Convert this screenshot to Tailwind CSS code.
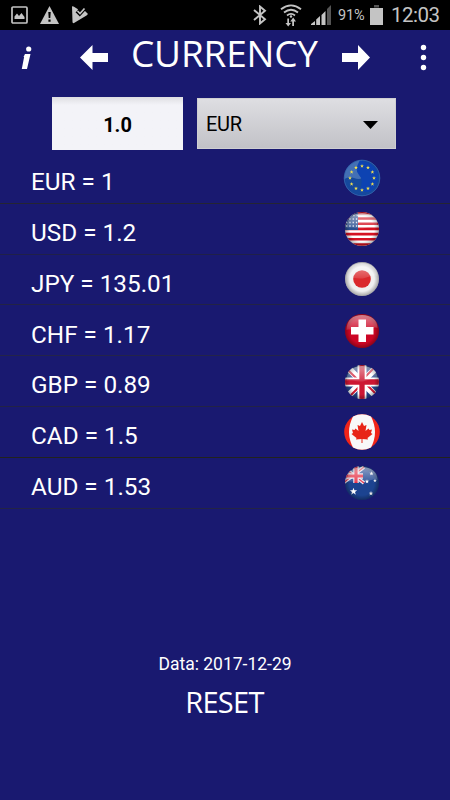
<!DOCTYPE html>
<html lang="en">
<head>
<meta charset="utf-8">
<title>Currency</title>
<script src="https://cdn.jsdelivr.net/npm/@tailwindcss/browser@4"></script>
</head>
<body class="w-[450px] h-[800px] overflow-hidden bg-[#191970] text-white font-['Roboto',sans-serif] flex flex-col">
<svg class="absolute w-0 h-0" aria-hidden="true">
  <defs>
    <clipPath id="c"><circle cx="20" cy="20" r="17"/></clipPath>
    <linearGradient id="gl" x1="0" y1="0" x2="0" y2="1"><stop offset="0" stop-color="#fff" stop-opacity=".5"/><stop offset="1" stop-color="#fff" stop-opacity=".12"/></linearGradient>
    <radialGradient id="sh" cx=".5" cy=".5" r=".5"><stop offset=".72" stop-color="#000" stop-opacity="0"/><stop offset="1" stop-color="#000" stop-opacity=".32"/></radialGradient>
    <g id="gloss"><circle cx="20" cy="20" r="17" fill="url(#sh)"/><path d="M4.500 19C4.500 9 11 4 20 4s15.500 5 15.500 13C29 15 25 20 18 19.500S8 18 4.500 19Z" fill="url(#gl)"/></g>
    <path id="st" d="M0-2 .5-.6 1.900-.6 .8.300 1.200 1.700 0 .8-1.200 1.700-.8.300-1.900-.6-.5-.6Z"/>
  </defs>
</svg>

<header class="h-[30px] shrink-0 bg-black flex items-center">
  <svg class="ml-[11px]" width="17" height="18" viewBox="0 0 17 18"><rect x="1" y="1" width="15" height="16" rx="1" fill="none" stroke="#c4c4c4" stroke-width="1.700"/><path d="M3.500 13V10.500L6 7.500 8 10 10.500 7 13.500 11V13Z" fill="#c4c4c4"/></svg>
  <svg class="ml-[12px]" width="19" height="18" viewBox="0 0 19 18"><path d="M9.500 0 19 18H0Z" fill="#c4c4c4"/><path d="M8.300 6h2.400l-.4 6H8.700ZM8.400 13.500h2.200v2.200H8.400Z" fill="#000"/></svg>
  <svg class="ml-[13px]" width="17" height="18" viewBox="0 0 17 18"><path d="M0 .5Q1 0 2 .8L6 3.200 4.500 6.500 7.800 9.500 12 4 16 8 14.500 9.500 2 17Q.5 17.500.5 16Z" fill="#c4c4c4"/><path d="M4 5.800 7.800 9.500 14 2.800" fill="none" stroke="#000" stroke-width="1.300"/><path d="M5.500 5 8 7.500 12.500 2.500" fill="none" stroke="#c4c4c4" stroke-width="1.700"/></svg>
  <svg class="ml-[164px]" width="14" height="20" viewBox="0 0 14 20"><path d="M1 5 12 14.300 7 18.500V1.500L12 5.700 1 15" fill="none" stroke="#c4c4c4" stroke-width="1.900"/></svg>
  <svg class="ml-[13px]" width="22" height="23" viewBox="0 0 22 23"><g fill="none" stroke="#c4c4c4" stroke-width="1.800"><path d="M1 5.300Q11-2.500 21 5.300M4 8.500Q11 3 18 8.500M7 11.500Q11 8.300 15 11.500"/></g><path d="M7.300 14.500H9V19H11L8.200 22.500 5.500 19H7.300ZM12.200 22V17.500h-1.900l2.900-4 2.800 4H14V22Z" fill="#c4c4c4"/><circle cx="11" cy="12.500" r="1.200" fill="#c4c4c4"/></svg>
  <svg class="ml-[9px]" width="20" height="20" viewBox="0 0 20 20"><g fill="#c4c4c4"><path d="M0 20V19L4 16V20ZM5.200 20V14.500L9 11V20ZM10.500 20V10L14.500 6V20Z"/></g><path d="M16 20V4L20 0V20Z" fill="#555"/></svg>
  <span class="ml-[7px] w-[28px] text-[14.5px] tracking-[-0.2px] text-[#c4c4c4] pt-[1px]">91%</span>
  <svg class="ml-[4px]" width="13" height="20" viewBox="0 0 13 20"><path d="M4 0h5v2.500H4Z" fill="#555"/><path d="M0 3h13v17H0Z" fill="#c4c4c4"/></svg>
  <span class="ml-[8px] text-[20.5px] tracking-[-0.5px] text-[#c4c4c4] pt-[1px]">12:03</span>
</header>

<nav class="h-[60px] shrink-0 flex items-start">
  <svg class="ml-[21px] mt-[15px]" width="11" height="25" viewBox="0 0 11 25"><circle cx="7.700" cy="4" r="2.600" fill="#fff"/><path d="M4 9H9.500L6 24H.800L3.100 12H2.500Z" fill="#fff"/></svg>
  <svg class="ml-[48px] mt-[15px]" width="28" height="25" viewBox="0 0 28 25"><path d="M0 12.500 12.500 0V8H28V17H12.500V25Z" fill="#fff"/></svg>
  <h1 class="ml-[23px] w-[189px] mt-[3px] h-[40px] leading-[40px] font-['Open_Sans',sans-serif] text-[37px] tracking-[-0.2px] whitespace-nowrap">CURRENCY</h1>
  <svg class="ml-[22px] mt-[15px]" width="28" height="25" viewBox="0 0 28 25"><path d="M28 12.500 16 0V8H0V17H16V25Z" fill="#fff"/></svg>
  <svg class="ml-[50px] mt-[14px]" width="7" height="27" viewBox="0 0 7 27" fill="#fff"><circle cx="3.500" cy="3.500" r="2.700"/><circle cx="3.500" cy="13.500" r="2.700"/><circle cx="3.500" cy="23.500" r="2.700"/></svg>
</nav>

<section class="h-[63px] shrink-0 flex items-start pl-[52px] pt-[7px] text-black text-[20px]">
  <div class="w-[131px] h-[53px] bg-linear-to-b from-[#dedee2] via-[#f3f3f8] via-15% to-[#f3f3f8] flex items-center justify-center font-bold pt-[2px]">1.0</div>
  <div class="ml-[14px] mt-[1px] w-[199px] h-[51px] bg-linear-to-b from-[#dedee2] to-[#c2c2c7] border border-[#cfcfd2] flex items-center justify-between pl-[8px] pr-[17px]"><span class="tracking-[-0.3px]">EUR</span><svg class="mt-[2px]" width="15" height="8" viewBox="0 0 15 8"><path d="M0 0H15L7.500 8Z"/></svg></div>
</section>

<ul class="shrink-0 text-[24.3px]">
  <li class="h-[50.8px] border-b border-[#252533] flex items-center justify-between pl-[31px] pr-[68px]"><span class="pt-[9px]">EUR = 1</span>
    <svg width="40" height="40" viewBox="0 0 40 40"><circle cx="20" cy="20" r="18.200" fill="#15499d"/><path d="M20 20V2.500A17.500 17.500 0 0 0 2.500 21Q7 18 12 20T20 20Z" fill="#638bc5" opacity=".6"/><path d="M18 2Q12 12 17 17T18 32Q28 38 34 27T29 6Z" fill="#0d43b2"/><g fill="#f7e34d"><use href="#st" x="20" y="8"/><use href="#st" x="26" y="9.600"/><use href="#st" x="30.400" y="14"/><use href="#st" x="32" y="20"/><use href="#st" x="30.400" y="26"/><use href="#st" x="26" y="30.400"/><use href="#st" x="20" y="32"/><use href="#st" x="14" y="30.400"/><use href="#st" x="9.600" y="26"/><use href="#st" x="8" y="20"/><use href="#st" x="9.600" y="14"/><use href="#st" x="14" y="9.600"/></g><circle cx="20" cy="20" r="17.800" fill="none" stroke="#5a84bd" stroke-width=".8" opacity=".5"/></svg></li>
  <li class="h-[50.8px] border-b border-[#202048] flex items-center justify-between pl-[31px] pr-[68px]"><span class="pt-[9px]">USD = 1.2</span>
    <svg width="40" height="40" viewBox="0 0 40 40"><g clip-path="url(#c)"><path d="M0 0H40V40H0Z" fill="#fff"/><path d="M0 4.300H40M0 9.500H40M0 14.700H40M0 19.900H40M0 25.100H40M0 30.300H40M0 35.500H40" stroke="#d51222" stroke-width="2.600"/><path d="M0 0H16V21H0Z" fill="#294f91"/><path d="M4 10H16M4 13.500H16M4 17H16M8 6.500H16" stroke="#dfe7f3" stroke-width="1.300" stroke-dasharray="1.300 2"/></g><use href="#gloss"/></svg></li>
  <li class="h-[50.8px] border-b border-[#232345] flex items-center justify-between pl-[31px] pr-[68px]"><span class="pt-[9px]">JPY = 135.01</span>
    <svg width="40" height="40" viewBox="0 0 40 40"><circle cx="20" cy="20" r="17" fill="#f0f0f0"/><circle cx="20" cy="20" r="8.800" fill="#da282c"/><use href="#gloss"/></svg></li>
  <li class="h-[50.8px] border-b border-[#242448] flex items-center justify-between pl-[31px] pr-[68px]"><span class="pt-[9px]">CHF = 1.17</span>
    <svg class="mt-[2px]" width="40" height="40" viewBox="0 0 40 40"><circle cx="20" cy="20" r="17" fill="#cc0524"/><use href="#gloss"/><path d="M16.500 8.500h7.500v7.500h7.500v7.500H24V31h-7.500v-7.500H9V16h7.500Z" fill="#fff"/></svg></li>
  <li class="h-[50.8px] border-b border-[#232345] flex items-center justify-between pl-[31px] pr-[68px]"><span class="pt-[9px]">GBP = 0.89</span>
    <svg class="mt-[1px]" width="40" height="40" viewBox="0 0 40 40"><g clip-path="url(#c)"><path d="M0 0H40V40H0Z" fill="#23458c"/><path d="M3 3 37 37M37 3 3 37" stroke="#fff" stroke-width="6.500"/><path d="M3 5 18 20M37 35 22 20M35 3 20 18M5 37 20 22" stroke="#d31c35" stroke-width="2"/><path d="M20 0V40M0 20H40" stroke="#fff" stroke-width="9"/><path d="M20 0V40M0 20H40" stroke="#cd1733" stroke-width="5.300"/></g><use href="#gloss"/></svg></li>
  <li class="h-[50.8px] border-b border-[#22231d] flex items-center justify-between pl-[31px] pr-[68px]"><span class="pt-[9px]">CAD = 1.5</span>
    <svg width="40" height="40" viewBox="0 0 40 40"><circle cx="20" cy="20" r="17.800" fill="#f12418"/><path d="M11 4.500Q20 0 29 4.500 37 20 29 35.500 20 40 11 35.500 3 20 11 4.500Z" fill="#f8f8f8"/><path d="M20 10 22 14 24.500 13 23.500 19 26.500 16.500 27.500 18 30 17.500 29 21 30.500 22 25.500 26 26 27.500 20.500 27V31H19.500V27L14 27.500 14.500 26 9.500 22 11 21 10 17.500 12.500 18 13.500 16.500 16.500 19 15.500 13 18 14Z" fill="#e82417"/></svg></li>
  <li class="h-[50.8px] border-b border-[#242445] flex items-center justify-between pl-[31px] pr-[68px]"><span class="pt-[9px]">AUD = 1.53</span>
    <svg width="40" height="40" viewBox="0 0 40 40"><g clip-path="url(#c)"><path d="M0 0H40V40H0Z" fill="#1c4390"/><path d="M1 4 22 20M1 20 22 4" stroke="#e8e4f0" stroke-width="3.500"/><path d="M1 4 22 20M1 20 22 4" stroke="#e62b40" stroke-width="1.300"/><path d="M14 0V20M0 13H21" stroke="#e8e4f0" stroke-width="5.500"/><path d="M14 0V20M0 13H21" stroke="#e62b40" stroke-width="3.200"/><g fill="#fff"><use href="#st" transform="translate(11.500 28.500) scale(1.900)"/><use href="#st" transform="translate(25 18.500) scale(1.100)"/><use href="#st" transform="translate(29 30.500) scale(1.200)"/><use href="#st" transform="translate(29.500 10.500) scale(1.100)"/><use href="#st" transform="translate(33 17.500)"/></g></g><use href="#gloss"/></svg></li>
</ul>

<footer class="flex flex-col items-center mt-[143px]">
  <p class="text-[17.5px] leading-[22px] pt-[1px]">Data: 2017-12-29</p>
  <button class="font-['Open_Sans',sans-serif] text-[29px] tracking-[-0.7px] leading-[36px] mt-[9px] mr-[1px]">RESET</button>
</footer>
</body>
</html>
